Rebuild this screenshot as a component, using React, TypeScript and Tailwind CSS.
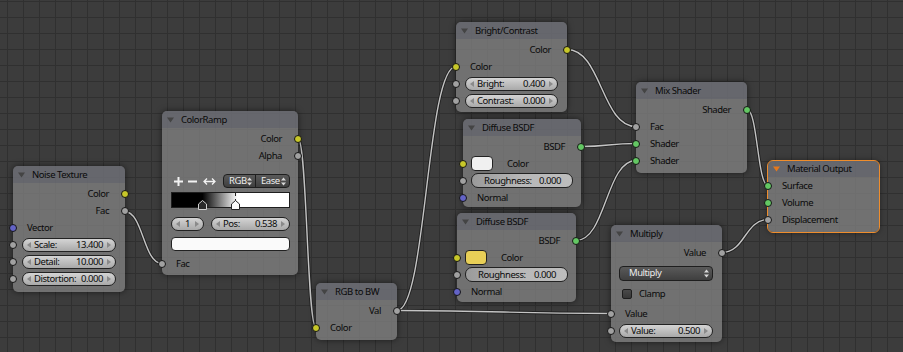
import React from 'react';

type Kind = 'color' | 'float' | 'vector' | 'shader';

const socketBg: Record<Kind, string> = {
  color: 'bg-[#c7c729]',
  float: 'bg-[#a1a1a1]',
  vector: 'bg-[#6363c7]',
  shader: 'bg-[#63c763]',
};

const Socket = ({ kind, side }: { kind: Kind; side: 'in' | 'out' }) => (
  <span
    className={`absolute top-1/2 -translate-y-1/2 w-[8px] h-[8px] rounded-full border border-[#151515] ${socketBg[kind]} ${
      side === 'in' ? '-left-[4px]' : '-right-[4px]'
    }`}
  />
);

const Output = ({ label, kind }: { label: string; kind: Kind }) => (
  <div className="relative h-[17px] flex items-center justify-end pr-[16px]">
    <span>{label}</span>
    <Socket kind={kind} side="out" />
  </div>
);

const Input = ({ label, kind }: { label: string; kind: Kind }) => (
  <div className="relative h-[17px] flex items-center pl-[14px]">
    <span>{label}</span>
    <Socket kind={kind} side="in" />
  </div>
);

const Arrow = ({ dir }: { dir: 'l' | 'r' }) => (
  <svg
    width="4"
    height="6"
    viewBox="0 0 4 6"
    className={`absolute top-1/2 -translate-y-1/2 ${dir === 'l' ? 'left-[4px]' : 'right-[4px]'}`}
  >
    <polygon points={dir === 'l' ? '4,0 0,3 4,6' : '0,0 4,3 0,6'} fill="#8a8a8a" />
  </svg>
);

const NumField = ({ label, value, className = 'flex-1' }: { label?: string; value: string; className?: string }) => (
  <div
    className={`relative h-[14px] flex items-center rounded-[7px] border border-[#222] bg-linear-to-b from-[#d4d4d4] to-[#a9a9a9] ${
      label ? 'pl-[11px] pr-[12px]' : 'justify-center'
    } ${className}`}
  >
    <Arrow dir="l" />
    {label && <span>{label}</span>}
    <span className={label ? 'ml-auto' : ''}>{value}</span>
    <Arrow dir="r" />
  </div>
);

const Slider = ({ label, value }: { label: string; value: string }) => (
  <div className="relative flex-1 h-[15px] flex items-center rounded-[7px] border border-[#222] bg-linear-to-r from-[#9a9a9a] via-[#b8b8b8] to-[#bdbdbd] pl-[12px] pr-[11px]">
    <span>{label}</span>
    <span className="ml-auto">{value}</span>
  </div>
);

// field row with a float input socket on the left edge
const FieldRow = ({ label, value, kind = 'float' }: { label: string; value: string; kind?: Kind }) => (
  <div className="relative h-[17px] flex items-center pl-[9px] pr-[9px]">
    <Socket kind={kind} side="in" />
    <NumField label={label} value={value} />
  </div>
);

const UpDown = () => (
  <svg width="5" height="9" viewBox="0 0 5 9" className="ml-auto mr-[3px]">
    <polygon points="0,3.5 2.5,0.5 5,3.5" fill="#d8d8d8" />
    <polygon points="0,5.5 2.5,8.5 5,5.5" fill="#d8d8d8" />
  </svg>
);

const Node = ({
  title,
  className,
  active = false,
  headerH = 'h-[17px]',
  children,
}: {
  title: string;
  className: string;
  active?: boolean;
  headerH?: string;
  children: React.ReactNode;
}) => (
  <div
    className={`absolute rounded-[5px] bg-[rgba(124,124,124,0.82)] shadow-[0_0_6px_rgba(0,0,0,0.55)] ${
      active ? 'outline outline-1 outline-[#ef8d2c]' : ''
    } ${className}`}
  >
    <div className={`flex items-center ${headerH} rounded-t-[5px] bg-[rgba(88,90,104,0.45)] pl-[5px]`}>
      <svg width="7" height="6" viewBox="0 0 7 6">
        <polygon points="0,0.5 7,0.5 3.5,5.5" fill={active ? '#e4781c' : '#444'} />
      </svg>
      <span className="ml-[7px]">{title}</span>
    </div>
    {children}
  </div>
);

// wires between sockets: [x1, y1, x2, y2]
const links: [number, number, number, number][] = [
  [124.5, 211.5, 162, 263.5],
  [298, 138.5, 316, 327.5],
  [397, 310.5, 456, 66.5],
  [397, 310.5, 611, 313.5],
  [567, 49.5, 636, 126.5],
  [581, 146.5, 636, 143.5],
  [576, 240.5, 636, 160.5],
  [747, 109.5, 768, 185.5],
  [722, 252.5, 768, 219.5],
];

const wirePath = ([x1, y1, x2, y2]: [number, number, number, number]) => {
  const h = Math.abs(x2 - x1) * 0.5;
  return `M${x1} ${y1} C${x1 + h} ${y1} ${x2 - h} ${y2} ${x2} ${y2}`;
};

export default function App() {
  return (
    <div className="relative w-[903px] h-[352px] overflow-hidden bg-[#3c3c3c] bg-[linear-gradient(to_right,#303030_1px,transparent_1px),linear-gradient(to_bottom,#303030_1px,transparent_1px)] bg-size-[16px_16px] bg-position-[7px_1px] font-['Noto_Sans',sans-serif] text-[9.5px] tracking-[-0.45px] leading-none text-[#0a0a0a]">
      <svg className="absolute inset-0" width="903" height="352">
        {links.map((l, i) => (
          <g key={i}>
            <path d={wirePath(l)} stroke="#1c1c1c" strokeOpacity="0.85" strokeWidth="3.2" fill="none" />
            <path d={wirePath(l)} stroke="#c4c4c4" strokeWidth="1.4" fill="none" />
          </g>
        ))}
      </svg>

      <Node title="Noise Texture" className="left-[13px] top-[166px] w-[112px] h-[126px]">
        <div className="pt-[2px]">
          <Output label="Color" kind="color" />
          <Output label="Fac" kind="float" />
          <Input label="Vector" kind="vector" />
          <FieldRow label="Scale:" value="13.400" />
          <FieldRow label="Detail:" value="10.000" />
          <FieldRow label="Distortion:" value="0.000" />
        </div>
      </Node>

      <Node title="ColorRamp" className="left-[162px] top-[111px] w-[136px] h-[164px]">
        <div className="pt-[2px]">
          <Output label="Color" kind="color" />
          <Output label="Alpha" kind="float" />
          <div className="mt-[10px] h-[14px] flex items-center pl-[12px] pr-[8px]">
            <svg width="9" height="9" viewBox="0 0 9 9">
              <rect x="0" y="3.5" width="9" height="2" fill="#f2f2f2" />
              <rect x="3.5" y="0" width="2" height="9" fill="#f2f2f2" />
            </svg>
            <svg width="9" height="9" viewBox="0 0 9 9" className="ml-[5px]">
              <rect x="0" y="3.5" width="9" height="2" fill="#f2f2f2" />
            </svg>
            <svg width="13" height="9" viewBox="0 0 13 9" className="ml-[6px]">
              <path d="M1 4.5 H12 M4 1.5 L1 4.5 L4 7.5 M9 1.5 L12 4.5 L9 7.5" stroke="#f2f2f2" strokeWidth="1.3" fill="none" />
            </svg>
            <div className="ml-auto flex h-[14px] w-[67px] rounded-[4px] border border-[#1e1e1e] bg-linear-to-b from-[#5a5a5a] to-[#3f3f3f] text-[#ececec]">
              <div className="w-[32px] flex items-center pl-[5px] border-r border-[#1e1e1e]">
                <span>RGB</span>
                <UpDown />
              </div>
              <div className="flex-1 flex items-center pl-[5px]">
                <span>Ease</span>
                <UpDown />
              </div>
            </div>
          </div>
          <div className="relative mt-[4px] ml-[9px] w-[119px] h-[16px]">
            <div className="h-full border border-[#1e1e1e] bg-[linear-gradient(to_right,#000_26%,#fff_56%)]" />
            <div className="absolute left-[64px] top-[1px] h-[9px] border-l border-dashed border-[#222]" />
            <svg width="9" height="10" viewBox="0 0 9 10" className="absolute left-[27px] top-[8px]">
              <polygon points="0.5,4 4.5,0.5 8.5,4 8.5,9.5 0.5,9.5" fill="#2a2a2a" stroke="#d0d0d0" strokeWidth="1" />
            </svg>
            <svg width="9" height="10" viewBox="0 0 9 10" className="absolute left-[60px] top-[8px]">
              <polygon points="0.5,4 4.5,0.5 8.5,4 8.5,9.5 0.5,9.5" fill="#fafafa" stroke="#222" strokeWidth="1" />
            </svg>
          </div>
          <div className="mt-[9px] h-[14px] flex items-center pl-[9px] pr-[8px] gap-[7px]">
            <NumField value="1" className="w-[33px]" />
            <NumField label="Pos:" value="0.538" className="flex-1" />
          </div>
          <div className="mt-[6px] ml-[9px] mr-[8px] h-[14px] rounded-[4px] border border-[#222] bg-[#fafafa]" />
          <div className="mt-[4px]">
            <Input label="Fac" kind="float" />
          </div>
        </div>
      </Node>

      <Node title="Bright/Contrast" className="left-[456px] top-[22px] w-[111px] h-[90px]">
        <div className="pt-[2px]">
          <Output label="Color" kind="color" />
          <Input label="Color" kind="color" />
          <FieldRow label="Bright:" value="0.400" />
          <FieldRow label="Contrast:" value="0.000" />
        </div>
      </Node>

      <Node title="Diffuse BSDF" className="left-[463px] top-[119px] w-[118px] h-[88px]">
        <div className="pt-[2px]">
          <Output label="BSDF" kind="shader" />
          <div className="relative h-[17px] flex items-center pl-[8px]">
            <Socket kind="color" side="in" />
            <div className="w-[22px] h-[15px] rounded-[4px] border border-[#222] bg-[#f0f0f0]" />
            <span className="ml-[14px]">Color</span>
          </div>
          <div className="relative h-[17px] flex items-center pl-[8px] pr-[8px]">
            <Socket kind="float" side="in" />
            <Slider label="Roughness:" value="0.000" />
          </div>
          <Input label="Normal" kind="vector" />
        </div>
      </Node>

      <Node title="Diffuse BSDF" className="left-[457px] top-[213px] w-[119px] h-[89px]">
        <div className="pt-[2px]">
          <Output label="BSDF" kind="shader" />
          <div className="relative h-[17px] flex items-center pl-[8px]">
            <Socket kind="color" side="in" />
            <div className="w-[22px] h-[15px] rounded-[4px] border border-[#222] bg-[#e8cf57]" />
            <span className="ml-[14px]">Color</span>
          </div>
          <div className="relative h-[17px] flex items-center pl-[8px] pr-[8px]">
            <Socket kind="float" side="in" />
            <Slider label="Roughness:" value="0.000" />
          </div>
          <Input label="Normal" kind="vector" />
        </div>
      </Node>

      <Node title="RGB to BW" className="left-[316px] top-[283px] w-[81px] h-[57px]">
        <div className="pt-[2px]">
          <Output label="Val" kind="float" />
          <Input label="Color" kind="color" />
        </div>
      </Node>

      <Node title="Mix Shader" className="left-[636px] top-[82px] w-[111px] h-[91px]">
        <div className="pt-[2px]">
          <Output label="Shader" kind="shader" />
          <Input label="Fac" kind="float" />
          <Input label="Shader" kind="shader" />
          <Input label="Shader" kind="shader" />
        </div>
      </Node>

      <Node title="Multiply" className="left-[611px] top-[225px] w-[111px] h-[117px]">
        <div className="pt-[2px]">
          <Output label="Value" kind="float" />
          <div className="h-[24px] flex items-center pl-[8px] pr-[9px]">
            <div className="flex-1 h-[15px] flex items-center rounded-[4px] border border-[#1e1e1e] bg-linear-to-b from-[#5a5a5a] to-[#3f3f3f] pl-[9px] text-[#ececec]">
              <span>Multiply</span>
              <UpDown />
            </div>
          </div>
          <div className="h-[18px] flex items-center pl-[11px]">
            <div className="w-[10px] h-[10px] rounded-[2px] border border-[#1e1e1e] bg-linear-to-b from-[#4a4a4a] to-[#383838]" />
            <span className="ml-[7px]">Clamp</span>
          </div>
          <div className="mt-[2px]">
            <Input label="Value" kind="float" />
          </div>
          <div className="relative h-[17px] flex items-center pl-[8px] pr-[9px]">
            <Socket kind="float" side="in" />
            <NumField label="Value:" value="0.500" />
          </div>
        </div>
      </Node>

      <Node title="Material Output" active headerH="h-[16px]" className="left-[768px] top-[161px] w-[111px] h-[71px]">
        <Input label="Surface" kind="shader" />
        <Input label="Volume" kind="shader" />
        <Input label="Displacement" kind="float" />
      </Node>
    </div>
  );
}
